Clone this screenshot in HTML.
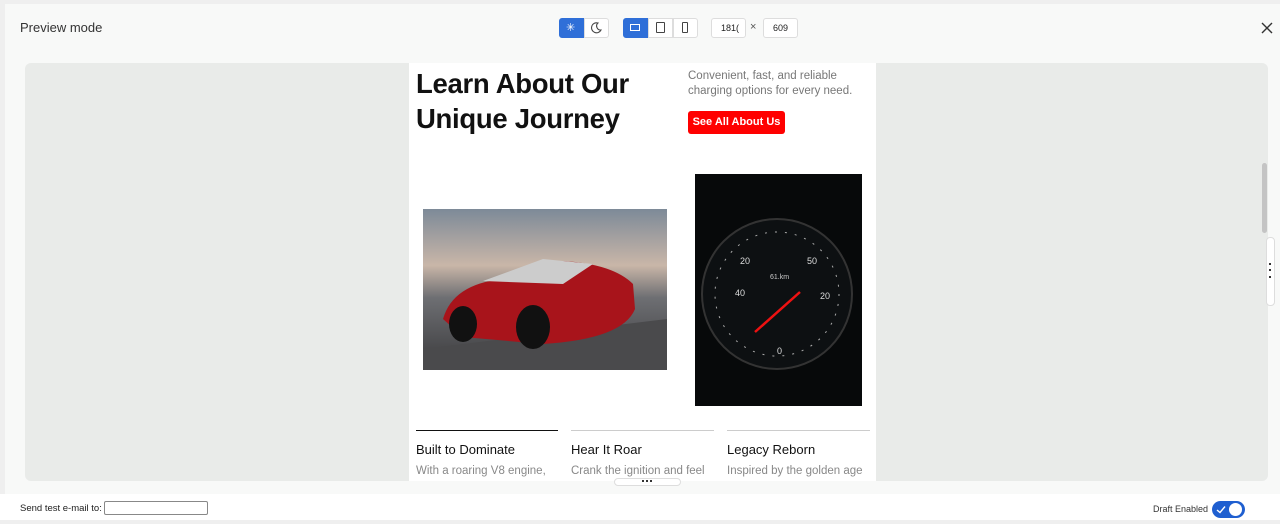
<!DOCTYPE html>
<html><head><style>
*{margin:0;padding:0;box-sizing:border-box}
body{width:1280px;height:524px;background:#efefef;font-family:"Liberation Sans",sans-serif;position:relative;overflow:hidden}
.panel{position:absolute;left:5px;top:4px;width:1275px;height:490px;background:#f8f9f8}
.bottom{position:absolute;left:0;top:494px;width:1280px;height:26px;background:#fff}
.frame{position:absolute;left:25px;top:63px;width:1243px;height:418px;background:#e9ebe9;border-radius:6px;overflow:hidden}
.page{position:absolute;left:409px;top:63px;width:467px;height:418px;background:#fff;overflow:hidden;font-family:"Liberation Sans",sans-serif}
.btn{position:absolute;border:1px solid #ddd;background:#fff;border-radius:3px}
.blue{background:#2f6fd8;border-color:#2f6fd8}
</style></head><body>
<div class="panel"></div>
<div style="position:absolute;left:20px;top:20px;font-size:13px;color:#333">Preview mode</div>
<div class="btn blue" style="left:559px;top:18px;width:25px;height:20px;border-radius:3px 0 0 3px"></div>
<div style="position:absolute;left:566px;top:21px;color:#fff;font-size:11px">✳</div>
<div class="btn" style="left:584px;top:18px;width:25px;height:20px;border-radius:0 3px 3px 0"></div>
<svg style="position:absolute;left:590px;top:21px" width="13" height="13" viewBox="0 0 13 13"><path d="M8 2a5 5 0 1 0 3 7A4 4 0 0 1 8 2z" fill="none" stroke="#444" stroke-width="1.1"/></svg>
<div class="btn blue" style="left:623px;top:18px;width:25px;height:20px;border-radius:3px 0 0 3px"></div>
<div style="position:absolute;left:630px;top:24px;width:10px;height:7px;border:1px solid #fff"></div>
<div class="btn" style="left:648px;top:18px;width:25px;height:20px;border-radius:0"></div>
<div style="position:absolute;left:656px;top:22px;width:9px;height:11px;border:1.3px solid #444;border-radius:1px"></div>
<div class="btn" style="left:673px;top:18px;width:25px;height:20px;border-radius:0 3px 3px 0"></div>
<div style="position:absolute;left:682px;top:22px;width:6px;height:11px;border:1.3px solid #444;border-radius:1px"></div>
<div class="btn" style="left:711px;top:18px;width:35px;height:20px;font-size:9px;color:#222;padding:4px 0 0 9px">181(</div>
<div style="position:absolute;left:750px;top:21px;font-size:11px;color:#555">×</div>
<div class="btn" style="left:763px;top:18px;width:35px;height:20px;font-size:9px;color:#222;padding:4px 0 0 9px">609</div>
<svg style="position:absolute;left:1261px;top:22px" width="12" height="12" viewBox="0 0 12 12"><path d="M1 1L11 11M11 1L1 11" stroke="#333" stroke-width="1.4"/></svg>
<div class="frame"></div>
<div style="position:absolute;left:1262px;top:163px;width:5px;height:70px;background:#c4c4c4;border-radius:3px"></div>
<div style="position:absolute;left:1266px;top:237px;width:9px;height:69px;background:#fff;border:1px solid #ddd;border-radius:4px"></div>
<div style="position:absolute;left:1269px;top:263px;width:2px;height:2px;background:#333;box-shadow:0 6px #333,0 13px #333"></div>
<div class="page">
 <div style="position:absolute;left:7px;top:3px;font-size:27.5px;font-weight:bold;line-height:35px;color:#111;letter-spacing:-0.3px">Learn About Our<br>Unique Journey</div>
 <div style="position:absolute;left:279px;top:5px;font-size:11.5px;line-height:15px;color:#777;padding-top:1px">Convenient, fast, and reliable<br>charging options for every need.</div>
 <div style="position:absolute;left:279px;top:48px;width:97px;height:23px;background:#f00;border-radius:3px;color:#fff;font-size:11px;font-weight:bold;text-align:center;line-height:23px;white-space:nowrap">See All About Us</div>
 <div style="position:absolute;left:14px;top:146px;width:244px;height:161px;background:linear-gradient(180deg,#7d8a98 0%,#c9b6a8 35%,#6e6f73 55%,#3a3a3c 100%)">
  <svg width="244" height="161" viewBox="0 0 244 161"><path d="M0 140 L244 110 L244 161 L0 161Z" fill="#4a4a4c"/><path d="M20 110 Q30 75 80 70 L140 52 Q190 55 210 75 L212 100 Q200 130 120 135 L40 128Z" fill="#a8141b"/><path d="M60 72 L120 50 L170 55 L140 75Z" fill="#ccc"/><ellipse cx="40" cy="115" rx="14" ry="18" fill="#111"/><ellipse cx="110" cy="118" rx="17" ry="22" fill="#111"/></svg>
 </div>
 <div style="position:absolute;left:286px;top:111px;width:167px;height:232px;background:#07090a">
  <svg width="167" height="232" viewBox="0 0 167 232"><circle cx="82" cy="120" r="75" fill="#0d1012" stroke="#333" stroke-width="2"/><circle cx="82" cy="120" r="62" fill="none" stroke="#aaa" stroke-width="1" stroke-dasharray="2 8"/><line x1="60" y1="158" x2="105" y2="118" stroke="#e11" stroke-width="2.5"/><text x="75" y="105" fill="#ccc" font-size="7">61.km</text><text x="45" y="90" fill="#ddd" font-size="9">20</text><text x="40" y="122" fill="#ddd" font-size="9">40</text><text x="112" y="90" fill="#ddd" font-size="9">50</text><text x="125" y="125" fill="#ddd" font-size="9">20</text><text x="82" y="180" fill="#ddd" font-size="9">0</text></svg>
 </div>
 <div style="position:absolute;left:7px;top:367px;width:142px;height:1px;background:#111"></div>
 <div style="position:absolute;left:162px;top:367px;width:143px;height:1px;background:#ccc"></div>
 <div style="position:absolute;left:318px;top:367px;width:143px;height:1px;background:#ccc"></div>
 <div style="position:absolute;left:7px;top:379px;font-size:13px;color:#111">Built to Dominate</div>
 <div style="position:absolute;left:162px;top:379px;font-size:13px;color:#111">Hear It Roar</div>
 <div style="position:absolute;left:318px;top:379px;font-size:13px;color:#111">Legacy Reborn</div>
 <div style="position:absolute;left:7px;top:402px;font-size:11.5px;color:#888;white-space:nowrap">With a roaring V8 engine,</div>
 <div style="position:absolute;left:162px;top:402px;font-size:11.5px;color:#888;white-space:nowrap">Crank the ignition and feel</div>
 <div style="position:absolute;left:318px;top:402px;font-size:11.5px;color:#888;white-space:nowrap">Inspired by the golden age</div>
</div>
<div style="position:absolute;left:614px;top:478px;width:67px;height:8px;background:#fff;border:1px solid #ddd;border-radius:4px"></div>
<div style="position:absolute;left:642px;top:480px;width:2px;height:2px;background:#333;box-shadow:4px 0 #333,8px 0 #333"></div>
<div class="bottom"></div>
<div style="position:absolute;left:20px;top:503px;font-size:9.5px;color:#222">Send test e-mail to:</div>
<div style="position:absolute;left:104px;top:501px;width:104px;height:14px;border:1px solid #888;border-radius:2px;background:#fff"></div>
<div style="position:absolute;left:1153px;top:504px;font-size:9px;color:#333">Draft Enabled</div>
<div style="position:absolute;left:1212px;top:501px;width:33px;height:17px;background:#1f5fd0;border-radius:9px"></div>
<div style="position:absolute;left:1229px;top:503px;width:13px;height:13px;background:#fff;border-radius:50%"></div>
<svg style="position:absolute;left:1216px;top:505px" width="10" height="9" viewBox="0 0 10 9"><path d="M1 5L4 7.5L9 1.5" fill="none" stroke="#fff" stroke-width="1.4"/></svg>
</body></html>
